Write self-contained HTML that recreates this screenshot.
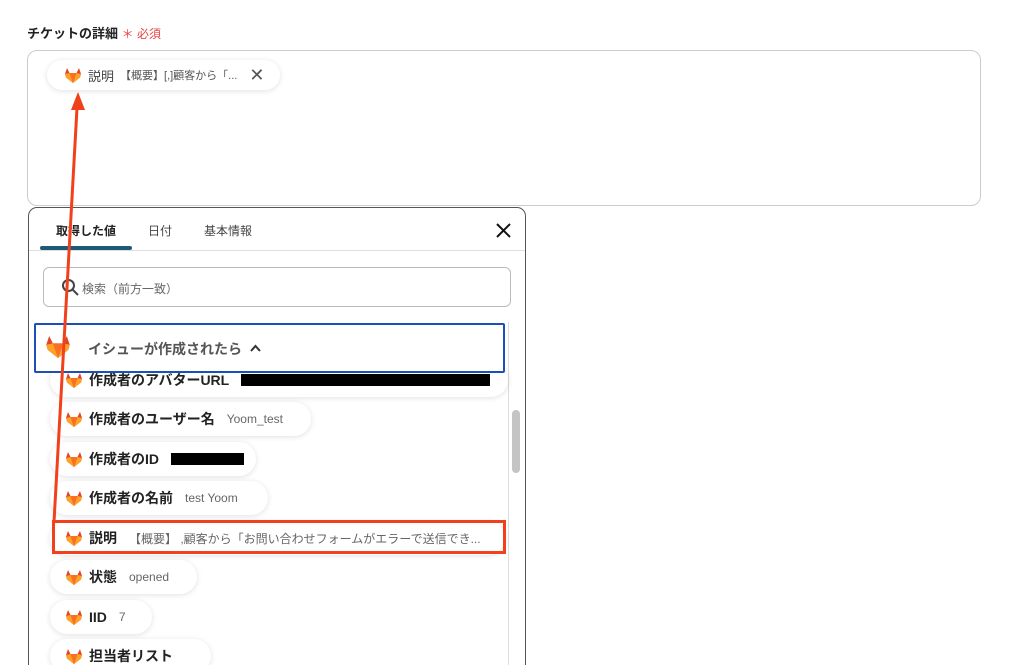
<!DOCTYPE html>
<html style="width:1013px;height:665px;overflow:hidden"><head><meta charset="utf-8"><style>
*{box-sizing:border-box;margin:0;padding:0}
body{width:1013px;height:665px;background:#fff;font-family:"Liberation Sans","Noto Sans CJK JP",sans-serif;position:relative;overflow:hidden;color:#333}
.a{position:absolute}
.pill{position:absolute;left:50px;height:34px;border-radius:17px;background:#fff;box-shadow:0 1px 6px rgba(0,0,0,.12);display:flex;align-items:center;padding-left:16px;font-size:14px;font-weight:bold;color:#222;white-space:nowrap}
.pill svg{margin-right:7px}
.pill .v{font-weight:normal;font-size:12px;color:#666;margin-left:12px}
.blk{display:inline-block;background:#000;height:12px;margin-left:12px}
</style></head><body>
<svg width="0" height="0" style="position:absolute"><defs><symbol id="gl" viewBox="0 0 16 15"><path d="M8 15L1 9.5 0 6 2 0l2.5 5h7L14 0l2 6-1 3.5z" fill="#e24329"/><path d="M8 15L4.5 5h7z" fill="#fc6d26"/><path d="M8 15L1 9.5 0 6 4.5 5z" fill="#fca326"/><path d="M8 15l7-5.5 1-3.5-4.5-1z" fill="#fca326"/></symbol></defs></svg>
<div class="a" style="left:27px;top:23px;font-size:13px;font-weight:bold;color:#222">チケットの詳細 <span style="color:#e94545;font-weight:normal;font-size:12px">＊ 必須</span></div>
<div class="a" style="left:27px;top:50px;width:954px;height:156px;border:1px solid #ccc;border-radius:10px"></div>
<div class="pill" style="left:47px;top:60px;height:30px;width:233px;font-weight:normal;padding-left:18px"><svg width="16" height="15"><use href="#gl"/></svg><span style="font-size:13px;color:#444">説明</span><span style="font-size:11px;color:#555;margin-left:6px">【概要】[,]顧客から「...</span><span style="margin-left:12px;font-size:18px;color:#555">✕</span></div>

<div class="a" style="left:28px;top:207px;width:498px;height:480px;border:1px solid #555;border-radius:9px;background:#fff"></div>
<div class="a" style="left:56px;top:222px;font-size:12px;font-weight:bold;color:#222">取得した値</div>
<div class="a" style="left:148px;top:222px;font-size:12px;color:#444">日付</div>
<div class="a" style="left:204px;top:222px;font-size:12px;color:#444">基本情報</div>
<div class="a" style="left:40px;top:246px;width:92px;height:4px;background:#1e5a78;border-radius:2px"></div>
<div class="a" style="left:29px;top:250px;width:496px;height:1px;background:#ddd"></div>
<svg class="a" style="left:495px;top:222px" width="17" height="17"><path d="M2 2L15 15M15 2L2 15" stroke="#111" stroke-width="2"/></svg>
<div class="a" style="left:43px;top:267px;width:468px;height:40px;border:1px solid #bbb;border-radius:6px"></div>
<svg class="a" style="left:61px;top:278px" width="18" height="18"><circle cx="7.5" cy="7.5" r="5.5" fill="none" stroke="#444" stroke-width="2"/><path d="M12 12l5 5" stroke="#444" stroke-width="2"/></svg>
<div class="a" style="left:82px;top:280px;font-size:12px;color:#666">検索（前方一致）</div>
<div class="a" style="left:508px;top:322px;width:1px;height:343px;background:#ddd"></div>
<div class="a" style="left:512px;top:410px;width:8px;height:63px;background:#c4c4c4;border-radius:4px"></div>

<div class="pill" style="top:363px;width:458px"><svg width="16" height="15"><use href="#gl"/></svg>作成者のアバターURL<span class="blk" style="width:249px"></span></div>
<div class="a" style="left:34px;top:323px;width:471px;height:50px;border:2px solid #1c4fb8;background:#fff;border-radius:2px"></div>
<svg class="a" style="left:46px;top:336px" width="24" height="22"><use href="#gl"/></svg>
<div class="a" style="left:88px;top:339px;font-size:14px;font-weight:bold;color:#555">イシューが作成されたら</div>
<svg class="a" style="left:249px;top:343px" width="13" height="10"><path d="M2 8l4.5-5 4.5 5" fill="none" stroke="#333" stroke-width="2"/></svg>

<div class="pill" style="top:402px;width:261px"><svg width="16" height="15"><use href="#gl"/></svg>作成者のユーザー名<span class="v">Yoom_test</span></div>
<div class="pill" style="top:442px;width:206px"><svg width="16" height="15"><use href="#gl"/></svg>作成者のID<span class="blk" style="width:73px"></span></div>
<div class="pill" style="top:481px;width:218px"><svg width="16" height="15"><use href="#gl"/></svg>作成者の名前<span class="v">test Yoom</span></div>
<div class="pill" style="top:521px;width:455px"><svg width="16" height="15"><use href="#gl"/></svg>説明<span class="v" style="margin-left:12px">【概要】 ,顧客から「お問い合わせフォームがエラーで送信でき...</span></div>
<div class="a" style="left:52px;top:520px;width:454px;height:34px;border:3px solid #f0401c"></div>
<div class="pill" style="top:560px;width:147px"><svg width="16" height="15"><use href="#gl"/></svg>状態<span class="v">opened</span></div>
<div class="pill" style="top:600px;width:102px"><svg width="16" height="15"><use href="#gl"/></svg>IID<span class="v">7</span></div>
<div class="pill" style="top:639px;width:161px"><svg width="16" height="15"><use href="#gl"/></svg>担当者リスト</div>

<svg class="a" style="left:0;top:0" width="1013" height="665"><path d="M54 522L77 108" stroke="#f0401c" stroke-width="3"/><path d="M78 92L71 110L85 110z" fill="#f0401c"/></svg>
</body></html>
